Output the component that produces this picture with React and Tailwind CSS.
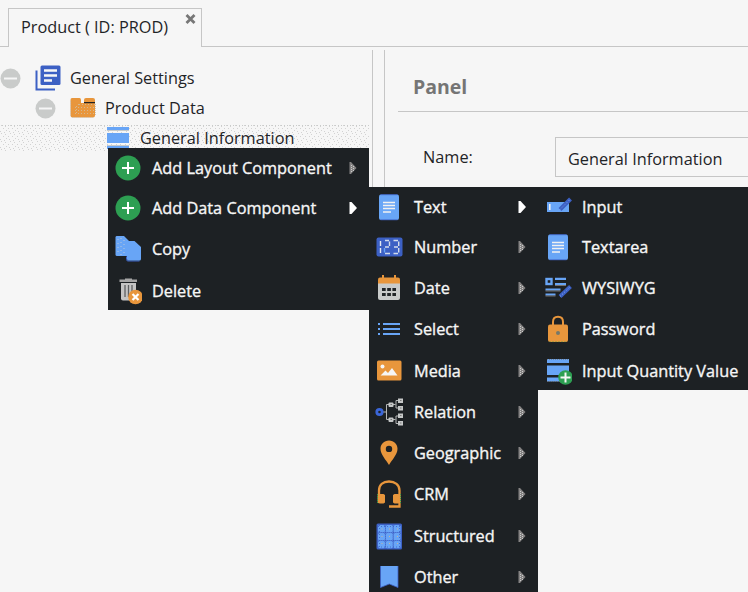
import React from "react";

const BLUE = "#68a5f6";
const NAVY = "#3c60c4";
const ORANGE = "#e8963c";
const GREEN = "#2d9f52";
const GREY = "#c9cbca";

function Icon({ children }) {
  return (
    <svg width="28" height="28" viewBox="0 0 28 28" className="block shrink-0">
      {children}
    </svg>
  );
}

/* ---------- tree icons ---------- */

function Collapse() {
  return (
    <svg width="21" height="21" viewBox="0 0 21 21" className="block shrink-0">
      <circle cx="10.5" cy="10.5" r="10" fill={GREY} />
      <rect x="4" y="9.5" width="13" height="2" fill="#f6f6f6" />
    </svg>
  );
}

function SettingsIcon() {
  return (
    <svg width="26" height="26" viewBox="0 0 26 26" className="block shrink-0">
      <path d="M1.500 5.500V24.500H20" fill="none" stroke={NAVY} strokeWidth="2" />
      <rect x="5.500" y="0.500" width="20" height="19.500" rx="1.500" fill={NAVY} />
      <path d="M9 5.500H22M9 10.500H22M9 15.500H17" stroke="#f6f6f6" strokeWidth="2.400" />
    </svg>
  );
}

function FolderIcon() {
  return (
    <svg width="26" height="20" viewBox="0 0 26 20" className="block shrink-0">
      <path d="M2 0H9.500Q11 0 11 2V5H25V17.500Q25 19.500 23 19.500H2.500Q0.500 19.500 0.500 17.500V2Q0.500 0 2 0Z" fill={ORANGE} />
      <path d="M14 4V2Q14 0 16 0H23Q25 0 25 2V4Z" fill={ORANGE} />
      <rect x="14" y="4" width="11" height="1.200" fill="#222" />
      <path d="M6.500 8V17M8.500 6V17M9 6.500H25M5 9.500H24M5 12.500H24M5 15.500H24" stroke="#d6b78e" strokeWidth="1" strokeDasharray="1 2" />
      <path d="M0.500 3V18M25.500 6V18M2 19.500H24" stroke="#cfc6b8" strokeWidth="1" strokeDasharray="1 1" />
    </svg>
  );
}

function PanelIcon() {
  return (
    <svg width="22" height="22" viewBox="0 0 22 22" className="block shrink-0" shapeRendering="crispEdges">
      <rect width="22" height="3" fill={BLUE} />
      <rect y="3" width="22" height="1" fill={GREY} />
      <rect y="6" width="22" height="10" fill={BLUE} />
      <rect y="18" width="22" height="1" fill={GREY} />
      <rect y="19" width="22" height="3" fill={BLUE} />
    </svg>
  );
}

function Dither() {
  return (
    <svg className="absolute inset-0 block h-full w-full" shapeRendering="crispEdges">
      <defs>
        <pattern id="dots" width="9" height="8" patternUnits="userSpaceOnUse">
          <path d="M1 0h1v1h-1zM5 1h1v1h-1zM8 3h1v1h-1zM3 3h1v1h-1zM0 6h1v1h-1zM6 5h1v1h-1zM4 7h1v1h-1z" fill="#d2d2d2" />
        </pattern>
      </defs>
      <rect width="100%" height="100%" fill="url(#dots)" />
      <path d="M2 0.500H369" stroke="#c9cbca" strokeDasharray="1 2" />
    </svg>
  );
}

/* ---------- menu icons ---------- */

const AddIcon = () => (
  <Icon>
    <circle cx="14" cy="14" r="12.500" fill={GREEN} />
    <path d="M14 8V20M8 14H20" stroke="#fff" strokeWidth="2" />
  </Icon>
);

const CopyIcon = () => (
  <Icon>
    <path d="M2.500 1H10L15 6V21H3Q1.500 21 1.500 19.500V2.500Q1.500 1 2.500 1Z" fill={BLUE} />
    <path d="M12.500 21.500V24.500Q12.500 26 14 26H25.500" fill="none" stroke={NAVY} strokeWidth="1" />
    <path d="M15 6H20.500L27 12V24Q27 25.500 25.500 25.500H14.500Q13 25.500 13 24V7Q13 6 15 6Z" fill={BLUE} />
    <path d="M4 4V20M7 3V20M10 5V20" stroke="#b7c7dc" strokeDasharray="1 3" />
  </Icon>
);

const DeleteIcon = () => (
  <Icon>
    <path d="M11 1.500H18V3H11Z" fill="#aaa" />
    <rect x="5.500" y="2.500" width="17.500" height="2.500" fill="#a5a5a5" />
    <path d="M7 6H22V21.500Q22 23.500 20 23.500H9Q7 23.500 7 21.500Z" fill="#c4c4c4" />
    <path d="M11 8V20M14.500 8V20M18 8V20" stroke="#5d5f60" strokeWidth="1.300" />
    <circle cx="21.500" cy="20" r="7.300" fill={ORANGE} />
    <path d="M18.500 17L24.500 23M24.500 17L18.500 23" stroke="#fff" strokeWidth="2.200" />
  </Icon>
);

const TextIcon = () => (
  <Icon>
    <rect x="4" y="1.500" width="20" height="25.500" rx="2" fill={BLUE} />
    <path d="M5.500 1.700H22.500M5.500 26.800H22.500" stroke={NAVY} strokeWidth="0.800" />
    <path d="M8 9.500H20M8 12.500H20M8 15.500H20M8 19H16" stroke="#f1f1f1" strokeWidth="1.400" />
  </Icon>
);

const NumberIcon = () => (
  <Icon>
    <rect x="1.500" y="4.500" width="26" height="19" rx="2" fill={NAVY} />
    <g fill="none" strokeWidth="1.400">
      <path d="M5.500 8V13M5.500 15V20" stroke="#e4e9f0" />
      <path d="M10 7.500H14M14.500 8.500V13M10 14H14M10 20.500H15" stroke="#d3dcea" />
      <path d="M9.500 15V19.500" stroke={BLUE} />
      <path d="M18.500 7.500H23M19 14H23M18.500 20.500H23M23.700 8.500V13M23.700 15V19.500" stroke="#d3dcea" />
    </g>
  </Icon>
);

const DateIcon = () => (
  <Icon>
    <path d="M3 9H25V24Q25 26 23 26H5Q3 26 3 24Z" fill={GREY} />
    <path d="M3 9.500V5.500Q3 3.500 5 3.500H23Q25 3.500 25 5.500V9.500Z" fill={ORANGE} />
    <path d="M8 1V5M20 1V5" stroke={ORANGE} strokeWidth="2" />
    <path d="M7 15.500H21M7 20.500H21" stroke="#222628" strokeWidth="3" strokeDasharray="3.700 1.500" />
  </Icon>
);

const SelectIcon = () => (
  <Icon>
    <path d="M3 9H5M3 14H5M3 19H5M8 9H25M8 14H25M8 19H25" stroke={BLUE} strokeWidth="2" />
  </Icon>
);

const MediaIcon = () => (
  <Icon>
    <rect x="2" y="3.500" width="24.500" height="20" rx="1.500" fill={ORANGE} />
    <circle cx="7.500" cy="9.500" r="2" fill="#f6f6f6" />
    <path d="M5.500 18.500L10.500 13.500L13 16L17 11L22.500 18.500Z" fill="#f6f6f6" />
  </Icon>
);

const RelationIcon = () => (
  <Icon>
    <path d="M8 14H11.500M14 6.500H11.500V21.500H14M17 6.500H20.500M24 2.500H21V10H24M17 21.500H20.500M24 18H21V25.500H24" fill="none" stroke="#b4b6b6" strokeWidth="1" />
    <circle cx="4.500" cy="14" r="2.700" fill="#1d2022" stroke="#3b66d8" strokeWidth="2.800" />
    <g fill="#c6c8c8">
      <rect x="13.500" y="4.500" width="5" height="4.500" rx="1" />
      <rect x="13.500" y="19.500" width="5" height="4.500" rx="1" />
      <rect x="23" y="0.500" width="5" height="4.500" />
      <rect x="23" y="8" width="5" height="4.500" />
      <rect x="23" y="15.500" width="5" height="4.500" />
      <rect x="23" y="23" width="5" height="4.500" />
    </g>
    <path d="M15.500 6.500h1.500M15.500 21.500h1.500M25 2.500h1.500M25 10h1.500M25 17.500h1.500M25 25h1.500" stroke="#777" strokeWidth="1.200" />
  </Icon>
);

const GeoIcon = () => (
  <Icon>
    <path fillRule="evenodd" d="M14 1.500C9 1.500 5.500 5.200 5.500 9.800C5.500 15.500 11 21 14 26C17 21 22.500 15.500 22.500 9.800C22.500 5.200 19 1.500 14 1.500ZM14 6.700A3.200 3.200 0 1 1 14 13.100A3.200 3.200 0 1 1 14 6.700Z" fill={ORANGE} />
  </Icon>
);

const CrmIcon = () => (
  <Icon>
    <path d="M4 16V10.500C4 5 8 1.500 14 1.500S24.500 5 24.500 10.500V26.500H14" fill="none" stroke={ORANGE} strokeWidth="2.300" />
    <path d="M10 15V22.500L8.500 23.500H5Q2.500 23.500 2.500 21V16.500Q2.500 14 5 14H8.500Z" fill={ORANGE} />
    <path d="M18 15V22.500L19.500 23.500H23Q25.500 23.500 25.500 21V16.500Q25.500 14 23 14H19.500Z" fill={ORANGE} />
    <path d="M2.500 14V23M25.500 14V23" stroke={GREEN} strokeDasharray="1 1" />
  </Icon>
);

const StructuredIcon = () => (
  <Icon>
    <rect x="1.500" y="1.500" width="25.500" height="26" rx="1.500" fill={NAVY} />
    <g fill={BLUE}>
      {[3, 11, 19].map((y) =>
        [3, 10.800, 18.600].map((x) => <rect key={`${x}-${y}`} x={x} y={y} width="7" height="7.200" rx="1.500" />)
      )}
    </g>
    <path d="M6.500 7h1M14 7h1M22 7h1M6.500 14.500h1M14 14.500h1M22 14.500h1M6.500 21.500h1M14 21.500h1M22 21.500h1" stroke="#c9b59a" />
    <path d="M3 10.600H26M3 18.600H26M10.400 3V26M18.200 3V26" stroke="#5583e0" strokeDasharray="1 1" />
    <path d="M3 4.500H26M3 25H26M4.500 3V26M24.500 3V26" stroke={NAVY} strokeWidth="0.800" strokeDasharray="1 2" />
  </Icon>
);

const OtherIcon = () => (
  <Icon>
    <path d="M5.500 3H23V24.500L14.300 21L5.500 24.500Z" fill={BLUE} />
    <path d="M5.500 3V24.500L14.300 21L23 24.500V3" fill="none" stroke={NAVY} strokeWidth="0.800" />
  </Icon>
);

const Pencil = ({ d }) => (
  <>
    <path d={d} stroke={NAVY} strokeWidth="4" fill="none" />
    <path d={d} stroke="#8eb1ee" strokeWidth="1" strokeDasharray="1 2" fill="none" />
  </>
);

const InputIcon = () => (
  <Icon>
    <rect x="3" y="9" width="22" height="10" fill={BLUE} />
    <path d="M5.800 11V17" stroke="#f6f6f6" strokeWidth="1.500" />
    <Pencil d="M16 16.500L26.500 6" />
  </Icon>
);

const WysiwygIcon = () => (
  <Icon>
    <rect x="2.500" y="5" width="5" height="5" fill="#1d2022" stroke={BLUE} strokeWidth="2.400" />
    <path d="M11 4.800H22M11 10H22M1.500 15.500H16.500M1.500 20.500H11.500" stroke={BLUE} strokeWidth="2.200" />
    <path d="M11 11.500H22M1.500 17H16.500M1.500 22H11.500" stroke="#8b8580" strokeWidth="0.800" />
    <Pencil d="M16 22.500L26.500 12.500" />
  </Icon>
);

const PasswordIcon = () => (
  <Icon>
    <path d="M9 10V7Q9 1.800 14 1.800T19 7V10" fill="none" stroke={ORANGE} strokeWidth="2" />
    <rect x="4" y="9.500" width="20" height="17.500" rx="2" fill={ORANGE} />
    <circle cx="14" cy="18" r="2" fill="#75786a" />
    <path d="M5.500 26.700H22.500" stroke={GREEN} strokeWidth="0.700" strokeDasharray="1 2" />
  </Icon>
);

const QuantityIcon = () => (
  <Icon>
    <rect x="3" y="2" width="22" height="4" fill={BLUE} />
    <rect x="3" y="8.500" width="22" height="9.500" fill={BLUE} />
    <rect x="3" y="20.500" width="22" height="4" fill={BLUE} />
    <path d="M3 2.500H25M3 24.500H25" stroke="#777" strokeDasharray="1 1" strokeWidth="0.700" />
    <circle cx="21.500" cy="20.500" r="7.300" fill={GREEN} />
    <path d="M21.500 15.500V25.500M16.500 20.500H26.500" stroke="#f6f6f6" strokeWidth="2" />
  </Icon>
);

function Arrow({ active }) {
  return (
    <svg width="8" height="12" viewBox="0 0 8 12" className="block shrink-0">
      {active ? (
        <path d="M0.500 0H2.500L8 6L2.500 12H0.500Z" fill="#fff" />
      ) : (
        <>
          <path d="M0.500 0H2L7.500 6L2 12H0.500Z" fill="#858383" />
          <path d="M2.500 3V10M4.500 4V9" stroke="#c9cbca" strokeDasharray="1 1" />
        </>
      )}
    </svg>
  );
}

function MenuRow({ icon: I, label, size, arrow, gap = "ml-[11px]" }) {
  return (
    <div className={`flex shrink-0 items-center ${size}`}>
      <I />
      <span className={`whitespace-nowrap text-[16.3px] leading-6 [-webkit-text-stroke:0.35px_#f6f6f6] ${gap}`}>{label}</span>
      {arrow && (
        <span className="ml-auto">
          <Arrow active={arrow === "active"} />
        </span>
      )}
    </div>
  );
}

const types = [
  ["Text", TextIcon, "active", "h-[40px]"],
  ["Number", NumberIcon, "idle", "h-[40px]"],
  ["Date", DateIcon, "idle", "h-[42px]"],
  ["Select", SelectIcon, "idle", "h-[40px]"],
  ["Media", MediaIcon, "idle", "h-[42px] pt-0.5"],
  ["Relation", RelationIcon, "idle", "h-[41px]"],
  ["Geographic", GeoIcon, "idle", "h-[41px]"],
  ["CRM", CrmIcon, "idle", "h-[41px]"],
  ["Structured", StructuredIcon, "idle", "h-[42px] pt-px"],
  ["Other", OtherIcon, "idle", "h-[41px]"],
];

const textTypes = [
  ["Input", InputIcon, "h-[40px]"],
  ["Textarea", TextIcon, "h-[40px]"],
  ["WYSIWYG", WysiwygIcon, "h-[42px]"],
  ["Password", PasswordIcon, "h-[40px]"],
  ["Input Quantity Value", QuantityIcon, "h-[42px] pt-0.5"],
];

export default function App() {
  return (
    <div className="relative flex h-[592px] w-[748px] flex-col overflow-hidden bg-[#f6f6f6] font-['Open_Sans','Noto_Sans',sans-serif] text-[16.3px] leading-6 text-[#1f2427]">
      <header className="flex h-[47px] shrink-0 items-end">
        <div className="w-2 border-b border-[#c6c6c6]" />
        <div className="flex h-[39px] w-[194px] justify-between border border-b-0 border-[#c6c6c6] pl-3 pr-[5px]">
          <span className="mt-1.5 whitespace-nowrap">Product ( ID: PROD)</span>
          <svg width="11" height="10" viewBox="0 0 11 10" className="mt-[5px] shrink-0">
            <path d="M1.500 1L9.500 9M9.500 1L1.500 9" stroke="#777" strokeWidth="2.800" />
          </svg>
        </div>
        <div className="flex-1 border-b border-[#c6c6c6]" />
      </header>

      <main className="flex flex-1 pt-[3px]">
        <aside className="flex w-[373px] shrink-0 flex-col border-r border-[#c6c6c6] pt-[13px]">
          <div className="flex h-[30px] items-center">
            <Collapse />
            <span className="ml-[14px]"><SettingsIcon /></span>
            <span className="ml-[9px] whitespace-nowrap">General Settings</span>
          </div>
          <div className="flex h-[30px] items-center pl-[35px]">
            <Collapse />
            <span className="ml-[14px]"><FolderIcon /></span>
            <span className="ml-[9px] whitespace-nowrap">Product Data</span>
          </div>
          <div className="relative mt-[2px] flex h-[26px] w-[369px] items-center pl-[107px]">
            <Dither />
            <span className="relative"><PanelIcon /></span>
            <span className="relative ml-[11px] whitespace-nowrap">General Information</span>
          </div>
        </aside>

        <section className="ml-[11px] flex flex-1 flex-col border-l border-[#c6c6c6] pl-[13px]">
          <div className="flex h-[62px] items-center border-b border-[#c6c6c6] pl-[15px] pt-3">
            <h1 className="text-[19.5px] leading-7 font-bold text-[#757575]">Panel</h1>
          </div>
          <div className="mt-[25px] flex h-10 items-center pl-[25px]">
            <span className="w-[132px]">Name:</span>
            <div className="flex h-10 flex-1 items-center border border-r-0 border-[#c6c6c6] pl-3 pt-1 whitespace-nowrap">
              General Information
            </div>
          </div>
        </section>
      </main>

      <nav className="absolute left-[108px] top-[148px] flex h-[162px] w-[261px] flex-col overflow-hidden bg-[#1d2124] pl-1.5 pr-3 text-[#f6f6f6]">
        <MenuRow icon={AddIcon} label="Add Layout Component" size="h-10" gap="ml-[10px]" arrow="idle" />
        <MenuRow icon={AddIcon} label="Add Data Component" size="h-10" gap="ml-[10px]" arrow="active" />
        <MenuRow icon={CopyIcon} label="Copy" size="h-[42px]" gap="ml-[10px]" />
        <MenuRow icon={DeleteIcon} label="Delete" size="h-[42px]" gap="ml-[10px]" />
      </nav>

      <nav className="absolute left-[369px] top-[187px] flex h-[405px] w-[169px] flex-col overflow-hidden bg-[#1d2124] pl-1.5 pr-3 text-[#f6f6f6]">
        {types.map(([label, icon, arrow, size]) => (
          <MenuRow key={label} icon={icon} label={label} arrow={arrow} size={size} />
        ))}
      </nav>

      <nav className="absolute left-[538px] top-[187px] flex h-[203px] w-[210px] flex-col overflow-hidden bg-[#1d2124] pl-1.5 text-[#f6f6f6]">
        {textTypes.map(([label, icon, size]) => (
          <MenuRow key={label} icon={icon} label={label} size={size} gap="ml-[10px]" />
        ))}
      </nav>
    </div>
  );
}
